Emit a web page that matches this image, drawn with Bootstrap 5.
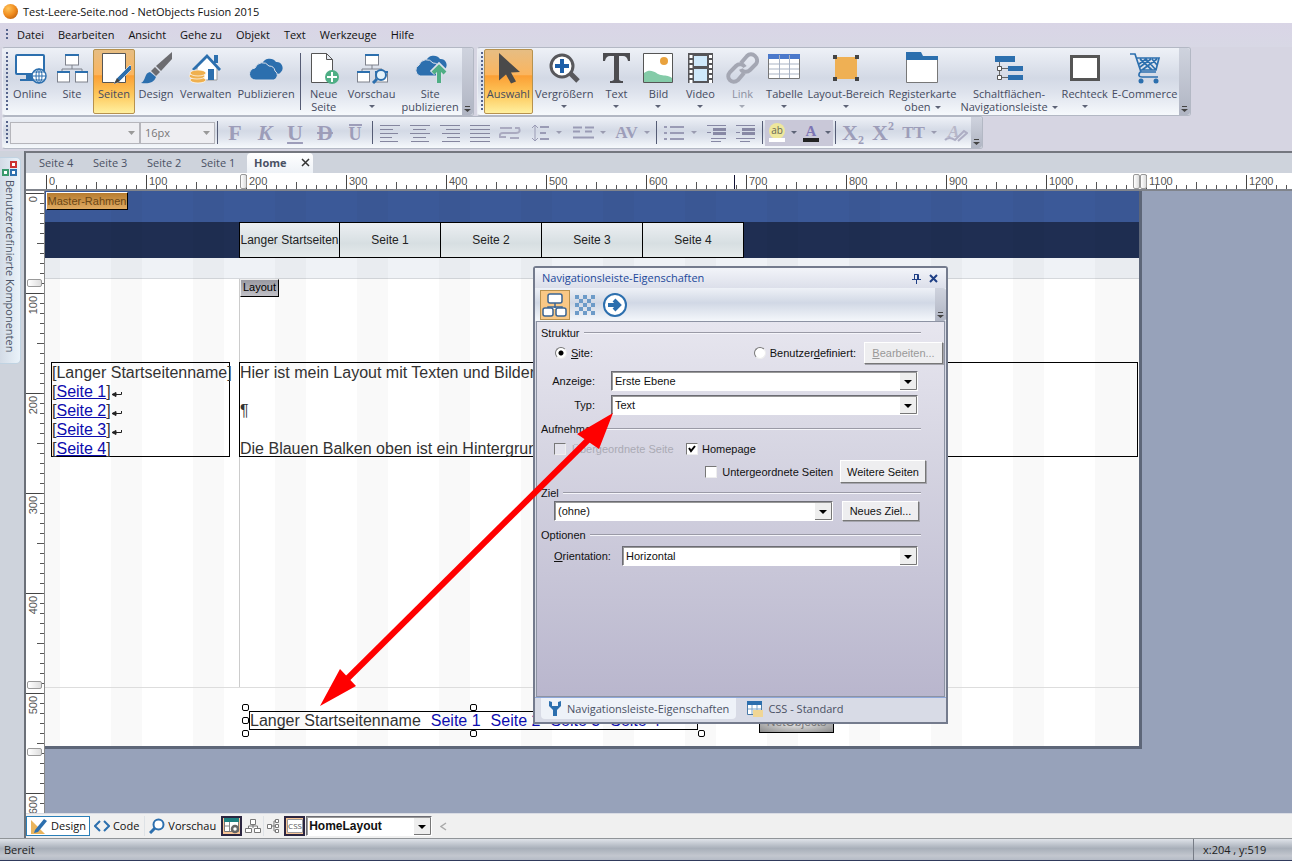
<!DOCTYPE html>
<html lang="de">
<head>
<meta charset="utf-8">
<meta name="viewport" content="width=device-width, initial-scale=1">
<title>Test-Leere-Seite.nod - NetObjects Fusion 2015</title>
<link href="https://cdn.jsdelivr.net/npm/bootstrap@5.3.0/dist/css/bootstrap.min.css" rel="stylesheet">
<style>
body{font-family:"Open Sans","Noto Sans",sans-serif;font-size:12px;line-height:14px;background:#d6d5e2;color:#111;overflow:hidden}
button,input,select{font:inherit;color:inherit}
button{padding:0;border:0;background:none}
svg{display:block;flex:none}
.titlebar{height:23px;background:#fff;padding-left:3px;gap:5px;font-size:11px;line-height:16px}
.orb{width:15px;height:15px;border-radius:50%;background:radial-gradient(circle at 35% 30%,#ffc45a,#ef8a1d 50%,#a44d08)}
.menubar{height:24px;padding-left:6px;font-size:11px;background:linear-gradient(#d9d5e6,#d8d8e5)}
.menubar a{color:#111;text-decoration:none;margin-right:14px}
.dots{width:2px;background:repeating-linear-gradient(#56648c 0 2px,transparent 2px 4px)}
.menubar .dots{height:12px;margin-right:9px}
.strip{border:1px solid #b3b8c4;border-left-color:#eceef4;border-radius:3px;background:linear-gradient(#eef1f7,#d3d9e5 45%,#dde2ec 65%,#f6f9fc)}
.bars{padding-left:2px}
.tools{height:69px;gap:3px}
.tools .dots,.fmt .dots{margin:4px 1px 4px 3px}
.fmt .dots{margin-right:2px}
.grip{width:11px;background:linear-gradient(#cfd3de,#b0b5c3);border-radius:0 3px 3px 0;display:flex;align-items:flex-end;justify-content:center;padding-bottom:3px}
.tool{display:flex;flex-direction:column;align-items:center;min-width:42px;padding:3px 2px 0;color:#454b60;font-size:11px;line-height:13px;border:1px solid transparent;white-space:nowrap}
.tight .tool{padding:3px 1px 0}
.tight .tool.on{padding:3px 2px 0}
.tool svg.ico{width:34px;height:32px;margin-bottom:3px}
.tool.dim{color:#8c90a0}
.tool.on{border-color:#b7924e;border-radius:2px;background:linear-gradient(#e6bd83,#fbb55e 39%,#fb9f35 41%,#fdc75a 70%,#fff0a0);margin:1px 0}
.tool.on svg.ico{margin-top:-1px}
.arr{display:inline-block;width:0;height:0;border:3px solid transparent;border-top-color:#5d6376;border-bottom:0}
.tool .arr{margin-top:5px}
.tool span .arr{margin:0 0 2px 2px}
.vsep{width:1px;background:#555c75;margin:5px 2px}
.fmtrow{margin-bottom:2px}
.fmt{height:33px;color:#9a9bb8}
.fmt .combo{height:22px;border:1px solid #b5b5bb;background:#eeeef2;color:#777;font-size:11px;padding:0 4px;border-radius:0}
.combo.face{width:130px}.combo.size{width:75px}
.fmt button{width:30px;height:26px;display:flex;align-items:center;justify-content:center;font-family:"Liberation Serif",serif;font-size:22px;line-height:24px;font-weight:700;color:#9d9db9}
.fmt button.n{width:29px}
.fmt button.w{width:43px;gap:6px}
.fmt button.w .arr{border-top-color:#9a9bb0}
.fmt button.mid{font-size:17px}
.fmt button small{font-size:12px;line-height:12px}
.fmt button .lo{align-self:flex-end}
.fmt button .hi{align-self:flex-start}
.over{border-top:2px solid #9d9db9;font-size:18px;line-height:16px}
.fmt .vsep{margin:4px 2px}
.pick{appearance:none;background-repeat:no-repeat!important}
.fmt .pick{background:#eeeef2 url("data:image/svg+xml,%3Csvg xmlns='http://www.w3.org/2000/svg' width='7' height='4'%3E%3Cpath d='M0 0h7L3.500 4z' fill='%23999'/%3E%3C/svg%3E") right 4px center}
.tones{background:#c9c8d8}
.fmt .tones button{width:34px;gap:5px}
.side{width:24px;background:#ced3dc;flex:none;padding-top:6px}
.sidetab{width:21px;height:207px;border-radius:0 5px 5px 0;background:linear-gradient(90deg,#d3dbe6,#eaf3fa);border:1px solid #c0d3e2;border-left:0;padding-top:3px;color:#4c5466}
.sidetab span{writing-mode:vertical-rl;font-size:11px;line-height:18px;margin-top:3px;white-space:nowrap}
.mainrow,.deskrow{min-height:0}
.work{border-left:2px solid #6b7078;border-top:2px solid #74777f;min-width:0}
.pagetabs{height:20px;background:#ced3dc;padding-left:3px;color:#4a5164}
.pagetabs a{color:inherit;text-decoration:none;padding:0 10px;font-size:11px;line-height:20px;width:54px;text-align:center;white-space:nowrap}
.pagetabs a.cur{width:66px;margin-left:2px;background:linear-gradient(#fff,#eef2f7);border-radius:4px 4px 0 0;font-weight:700;display:flex;justify-content:space-between;padding:0 3px 0 7px}
.hruler{height:18px;background:#fff;border-bottom:2px solid #80848c;padding-left:20px;overflow:hidden;position:relative;color:#555}
.hruler .scale{background:repeating-linear-gradient(90deg,#555 0 1px,transparent 1px 10px) 0 100%/100% 4px no-repeat,repeating-linear-gradient(90deg,#555 0 1px,transparent 1px 50px) 0 100%/100% 7px no-repeat}
.hruler .scale span{width:100px;flex:none;border-left:1px solid #444;padding-left:2px;font:11px/12px "Liberation Sans",sans-serif;height:14px;margin-top:2px}
.knob{position:absolute;width:7px;height:15px;top:1px;background:linear-gradient(90deg,#fff,#ddd);border:1px solid #999;border-radius:2px}
.kx1{left:214px}.kx2{left:1107px}.kx3{left:1114px}
.cursorline{position:absolute;left:708px;top:2px;width:1px;height:14px;background:#113}
.vruler .knob{width:15px;height:8px;left:1px}
.vruler .ky1{top:88px}.vruler .ky2{top:490px}.vruler .ky3{top:557px}
.vruler{width:19px;flex:none;background:#fff;border-right:1px solid #888;overflow:hidden;position:relative;padding-top:2px;color:#555}
.vruler .scale{height:700px;background:repeating-linear-gradient(#555 0 1px,transparent 1px 10px) 100% 0/4px 100% no-repeat,repeating-linear-gradient(#555 0 1px,transparent 1px 50px) 100% 0/7px 100% no-repeat}
.vruler .scale span{height:100px;flex:none;width:16px;border-top:1px solid #444;padding-top:2px}
.vruler .scale b{display:block;writing-mode:vertical-rl;transform:rotate(180deg);font:11px/14px "Liberation Sans",sans-serif}
.stage{background:#97a2ba;overflow:hidden;position:relative;min-width:0}
.sheet{position:relative;width:1097px;height:558px;border-right:3px solid #5d6678;border-bottom:3px solid #5d6678;background:#fff;font-family:"Liberation Sans",sans-serif;color:#333}
.guides{position:absolute;inset:0;background:repeating-linear-gradient(90deg,rgba(0,0,0,.022) 0 31px,transparent 31px 82px);background-position:-16px 0}
.b1{height:31px;background:#3b5998}.b2{height:36px;background:#1f2e52}.b3{height:21px;background:#eff2f6;border-bottom:1px solid #d5d8dc}
.obj{position:absolute}
.tag-m{left:1px;top:1px;background:linear-gradient(#b77c30,#e0ab62);border:1px solid #fff;border-right-color:#000;border-bottom-color:#000;font-size:11px;line-height:17px;width:82px;height:18px;text-align:center;color:#6b4716;white-space:nowrap}
.tag-l{left:195px;top:88px;background:linear-gradient(#9a9aa2,#c0c0c6);border:1px solid #eee;border-right-color:#000;border-bottom-color:#000;font-size:11px;line-height:15px;width:39px;height:18px;text-align:center;color:#000}
.sitenav{left:194px;top:31px;border:1px solid #000}
.sitenav a{width:101px;height:34px;border-right:1px solid #000;background:linear-gradient(#eceff2,#d7dfe2 60%,#e5eaeb);font-size:12px;line-height:34px;color:#222;text-decoration:none;text-align:center;overflow:hidden;white-space:nowrap}
.sitenav a:first-child{width:100px}
.sitenav a:last-child{border:0;width:100px}
.textobj{border:1px solid #000;font-size:16px;line-height:19px;white-space:nowrap}
.textobj a{color:#0c0cae}
.tree{left:6px;top:171px;width:179px;height:95px}
.copytext{left:194px;top:171px;width:899px;height:95px}
.area{left:194px;top:88px;right:0;height:409px;border-left:1px solid #ccc}
.areaend{left:0;right:0;top:496px;border-top:1px solid #ddd}
.foot{left:204px;top:520px;width:449px;height:19px;line-height:18px;display:flex;gap:10px}
.foot a{text-decoration:none}
.foot i{position:absolute;width:7px;height:7px;border:1px solid #000;border-radius:2px;background:#fff}
.foot .t{top:-8px}.foot .m{top:5px}.foot .b{top:18px}
.foot .l{left:-8px}.foot .c{left:220px}.foot .r{left:448px}
.logo{left:714px;top:520px;width:75px;height:22px;background:radial-gradient(#f4f4f4,#8a8a8a);border:1px solid #000;font-size:12px;color:#777;text-align:center;line-height:20px}
.dialogbox{left:488px;top:75px;width:415px;height:458px;border:2px solid #747b8d;border-radius:3px 3px 0 0;background:#d8dbe6;font:11px/14px "Liberation Sans",sans-serif;color:#111}
.dlg-title{height:20px;background:linear-gradient(#f2f4f9,#dcdfea);font:11px/20px "Open Sans",sans-serif;color:#22489a;padding:0 8px 0 7px}
.dlg-tools{height:33px;background:linear-gradient(#eef1f7,#d1d8e5 45%,#f4f7fb);padding-left:5px}
.dlg-tools button{width:30px;height:30px;display:grid;place-items:center}
.dlg-tools .on{background:#f9c885;border:1px solid #b8914e}
.dlg-body{margin:0 1px;border:1px solid #8d93a3;background:linear-gradient(#e7e6ef,#d6d5e2 35%,#b9b6cd);padding:4px 1px 0 4px}
.dlg-body .head{display:flex;align-items:center;gap:4px;height:14px;padding-right:22px;font-size:11px;margin:0;line-height:14px}
.dlg-body .head.sp{margin-top:7px}
.dlg-body .head.sp-s{margin-top:3px}
.dlg-body .head::after{content:"";flex:1;border-top:1px solid #9a9aa6;border-bottom:1px solid #f5f5fa}
.dlg-body .line{display:flex;align-items:center;white-space:nowrap;margin-top:4px}
.dlg-body .line.kind{height:22px;padding-left:14px;margin:2px 0 7px}
.dlg-body .line.near{margin-top:1px}
.dlg-body .line.far{margin-top:6px}
.line.inset{padding-left:13px}
.line.right{justify-content:flex-end;padding-right:17px}
.lab-a{width:54px;text-align:right;margin-right:16px}
.lab-k{width:107px;color:#aaaab4;margin:0 7px 0 6px}
.lab-u{margin:0 7px 0 5px}
.lab-o{width:68px}
.box{appearance:none;margin:0;width:12px;height:12px;flex:none;background:#fff;border:1px solid #777;border-right-color:#eee;border-bottom-color:#eee}
.box:disabled{background:#e4e3ec}
.box:checked{background:#fff url("data:image/svg+xml,%3Csvg xmlns='http://www.w3.org/2000/svg' width='10' height='10'%3E%3Cpath d='M2 4l2 3 4-5' fill='none' stroke='black' stroke-width='2'/%3E%3C/svg%3E")}
.box[type=radio]{border-radius:50%}
.box[type=radio]:checked{background:radial-gradient(#000 0 2px,#fff 3px)}
.pushy{background:#eeeef0;border:1px solid #fff;border-right-color:#777;border-bottom-color:#777;box-shadow:1px 1px 0 #a5a5ad;width:79px;height:22px}
.pushy.mehr{width:86px;height:23px}
.pushy.neu{width:77px;height:20px;margin-left:9px}
.pushy:disabled{color:#999}
.drop{height:20px;border:1px solid #6c6c74;border-right-color:#fff;border-bottom-color:#fff;border-radius:0;box-shadow:inset 1px 1px 0 #999;padding:0 20px 0 3px;background:#fff url("data:image/svg+xml,%3Csvg xmlns='http://www.w3.org/2000/svg' width='17' height='17'%3E%3Cpath d='M0 0h17v17H0z' fill='%23eee'/%3E%3Cpath d='M0 16.500h16.500V0' fill='none' stroke='%23777'/%3E%3Cpath d='M4 7h8l-4 4z'/%3E%3C/svg%3E") right 0 center}
.w307{width:307px}.w296{width:296px}.w279{width:279px}
.dlg-tabs{height:25px;font:11px/20px "Open Sans",sans-serif;color:#4a5164;padding-left:6px;border-top:1px solid #8ea7d9}
.dlg-tabs button{display:flex;align-items:center;gap:5px;height:21px;padding:0 7px;white-space:nowrap}
.dlg-tabs .cur{background:#eef2f8;border-radius:0 0 4px 4px}
.arrow{left:0;top:0;pointer-events:none}
.viewbar{height:25px;background:#f0f0f0;border-top:1px solid #d9dce4}
.viewbar button{display:flex;align-items:center;gap:3px;height:20px;padding:0 5px 0 4px;white-space:nowrap;font-size:11px}
.viewbar .sel{border:1px solid #2a7fb8;background:#fff;padding:0 3px}
.viewbar .sq{width:21px;padding:0;justify-content:center}
.viewbar .hot{background:#f9c596;border:2px solid #2b2540}
.viewbar .drop{font:700 12px/16px "Liberation Sans",sans-serif;width:126px;padding-left:2px;margin-left:1px}
.status{height:23px;flex:none;background:linear-gradient(#dfe3e9,#a8afb9 45%,#c3c7cf 80%,#b5bbc6);border-top:1px solid #909498;border-bottom:1px solid #303a5c;font-size:11px;line-height:21px;color:#222}
.status .pos{width:99px;border-left:1px solid #777c86;padding-left:9px}
</style>
</head>
<body class="d-flex flex-column vh-100">
<header class="titlebar d-flex align-items-center flex-shrink-0"><span class="orb"></span><span>Test-Leere-Seite.nod - NetObjects Fusion 2015</span></header>
<nav class="menubar d-flex align-items-center flex-shrink-0"><span class="dots"></span><a href="#">Datei</a><a href="#">Bearbeiten</a><a href="#">Ansicht</a><a href="#">Gehe zu</a><a href="#">Objekt</a><a href="#">Text</a><a href="#">Werkzeuge</a><a href="#">Hilfe</a></nav>

<div class="bars tools d-flex flex-shrink-0">
 <div class="strip d-flex">
  <span class="dots"></span>
  <button class="tool"><svg class="ico" viewBox="0 0 34 32"><rect x="3" y="3" width="28" height="19" rx="1" fill="#fff" stroke="#2c6fae" stroke-width="2"/><path d="M7 27h14v2H7zM13 23h6v4h-6z" fill="#2c6fae"/><circle cx="26" cy="24" r="7" fill="#fff" stroke="#2c6fae" stroke-width="1.500"/><ellipse cx="26" cy="24" rx="3" ry="7" fill="none" stroke="#2c6fae"/><path d="M19 24h14M26 17v14M21 20h10M21 28h10" stroke="#2c6fae"/></svg>Online</button>
  <button class="tool"><svg class="ico" viewBox="0 0 34 32"><g fill="#fff" stroke="#7e828c"><path d="M17 13v4M7 20v-3h20v3" fill="none"/><rect x="10.500" y="3" width="13" height="10"/><rect x="2.500" y="20" width="12" height="10"/><rect x="20.500" y="20" width="12" height="10"/></g><path d="M10 3h14M2 20h13M20 20h13" stroke="#2c6fae" stroke-width="2"/></svg>Site</button>
  <button class="tool on"><svg class="ico" viewBox="0 0 34 32"><path d="M5.500 1.500h23v29h-23z" fill="#fff" stroke="#555"/><path d="M17 32l3-6 13-13 3 3-13 13z" fill="#2c6fae" stroke="#fff" stroke-width=".6"/><path d="M17 32l3-6 3 3z" fill="#444"/></svg>Seiten</button>
  <button class="tool"><svg class="ico" viewBox="0 0 34 32"><path d="M33 0v7L22 19l-5-5z" fill="#6c6c70"/><path d="M16 15l5 5-4 4-5-5z" fill="#6c6c70"/><path d="M11 20l6 5c-2 6-8 7-15 6 5-2 3-10 9-11z" fill="#2c6fae"/></svg>Design</button>
  <button class="tool"><svg class="ico" viewBox="0 0 34 32"><path d="M8 14L18 4l10 10v14H8z" fill="#fff" stroke="#999"/><path d="M25 3h4v8h-4zM3 17L18 2l14 15-2 2L18 6 5 19z" fill="#2c6fae"/><path d="M19 17h6v11h-6z" fill="#2c6fae"/><g fill="#efb04e" stroke="#fff" stroke-width=".7"><ellipse cx="9" cy="28" rx="8" ry="3"/><ellipse cx="8" cy="24" rx="8" ry="3"/><ellipse cx="9" cy="21" rx="8" ry="3"/></g></svg>Verwalten</button>
  <button class="tool"><svg class="ico" viewBox="0 0 34 32"><path d="M14 22a5 5 0 01-1-10 8 8 0 0114-2 6 6 0 015 10q-1 2-4 2z" fill="#2c6fae"/><path d="M7 28a6 6 0 01-1-12 8 8 0 0114-2 6 6 0 016 5 5 5 0 01-1 9z" fill="#2c6fae" stroke="#dbe0ea"/></svg>Publizieren</button>
  <span class="vsep"></span>
  <button class="tool"><svg class="ico" viewBox="0 0 34 32"><path d="M4.500 1.500h15l6 6v23h-21zM19.500 1.500v6h6" fill="#fff" stroke="#555"/><circle cx="25" cy="25" r="7" fill="#4fae85"/><path d="M25 20v10M20 25h10" stroke="#fff" stroke-width="2"/></svg><span>Neue</span><span>Seite</span></button>
  <button class="tool"><svg class="ico" viewBox="0 0 34 32"><g fill="#fff" stroke="#7e828c"><path d="M17 13v4M7 20v-3h20v3" fill="none"/><rect x="10.500" y="3" width="13" height="10"/><rect x="2.500" y="20" width="12" height="10"/><rect x="20.500" y="20" width="12" height="10"/></g><path d="M10 3h14M2 20h13M20 20h13" stroke="#2c6fae" stroke-width="2"/><circle cx="26" cy="23" r="5" fill="#e5f3fb" stroke="#2c6fae" stroke-width="2"/><path d="M22 27l-4 4" stroke="#2c6fae" stroke-width="3"/></svg>Vorschau<i class="arr"></i></button>
  <button class="tool"><svg class="ico" viewBox="0 0 34 32"><path d="M14 19a5 5 0 01-1-10 8 8 0 0114-2 6 6 0 015 10q-1 2-4 2z" fill="#2c6fae"/><path d="M7 24a6 6 0 01-1-11 8 8 0 0114-2 6 6 0 016 5 5 5 0 01-1 8z" fill="#2c6fae" stroke="#dbe0ea"/><path d="M26 31V15M19 21l7-7 7 7" fill="none" stroke="#dbe0ea" stroke-width="6"/><path d="M26 31V15M20 21l6-6 6 6" fill="none" stroke="#4fae85" stroke-width="4"/></svg><span>Site</span><span>publizieren</span></button>
  <span class="grip"><svg width="7" height="6"><path d="M1 0h5v1H1zM0 3h7L3.500 6z" fill="#444"/></svg></span>
 </div>
 <div class="strip tight d-flex">
  <span class="dots"></span>
  <button class="tool on"><svg class="ico" viewBox="0 0 34 32"><path d="M8 1l21 19-9 .5 5 9-5 2-5-9-7 6z" fill="#4a4a4a"/></svg>Auswahl</button>
  <button class="tool"><svg class="ico" viewBox="0 0 34 32"><path d="M23 21l8 8" stroke="#58585c" stroke-width="5"/><circle cx="15" cy="14" r="11" fill="#fff" stroke="#58585c" stroke-width="3"/><path d="M15 7v14M8 14h14" stroke="#1d5fa8" stroke-width="4"/></svg>Vergrößern<i class="arr"></i></button>
  <button class="tool"><svg class="ico" viewBox="0 0 34 32"><path d="M4 1h27v8h-2q-1-5-5-5h-4v23q0 2 4 2v2H11v-2q4 0 4-2V4h-4q-4 0-5 5H4z" fill="#4c4c50"/></svg>Text<i class="arr"></i></button>
  <button class="tool"><svg class="ico" viewBox="0 0 34 32"><path d="M2.500 1.500h29v29h-29z" fill="#fff" stroke="#555"/><path d="M3 21c8-6 13 2 17 2 4 1 7 0 11 3v4H3z" fill="#84cba8"/><circle cx="23" cy="9" r="4" fill="#e9a23d"/></svg>Bild<i class="arr"></i></button>
  <button class="tool"><svg class="ico" viewBox="0 0 34 32"><path d="M5 1h25v30H5z" fill="#555559"/><path d="M11 4h13v10H11zM11 17h13v12H11z" fill="#cfe9fb"/><path d="M8 3v28M27.500 3v28" stroke="#fff" stroke-width="3" stroke-dasharray="3 2"/></svg>Video<i class="arr"></i></button>
  <button class="tool dim"><svg class="ico" viewBox="0 0 34 32"><g fill="none" stroke="#a4a7b3" stroke-width="4"><path d="M16 11l6-7c5-5 13 2 9 8l-6 6c-3 3-8 2-9-1"/><path d="M19 21l-6 7C7 33 0 26 5 20l6-6c3-3 7-2 9 1"/></g></svg>Link<i class="arr opacity-50"></i></button>
  <button class="tool"><svg class="ico" viewBox="0 0 34 32"><path d="M1.500 2.500h31v24h-31z" fill="#fff" stroke="#777"/><path d="M1 2h32v5H1z" fill="#4a78cb"/><path d="M2 12h30M2 17h30M2 22h30M12.500 3v23M22.500 3v23" stroke="#a9b3c4"/></svg>Tabelle<i class="arr"></i></button>
  <button class="tool"><svg class="ico" viewBox="0 0 34 32"><rect x="6" y="5" width="22" height="22" fill="#efb054"/><path d="M4 3h4v4H4zM26 3h4v4h-4zM4 25h4v4H4zM26 25h4v4h-4z" fill="#444"/></svg>Layout-Bereich<i class="arr"></i></button>
  <button class="tool"><svg class="ico" viewBox="0 0 34 32"><path d="M1.500 6.500h31v24h-31z" fill="#fff" stroke="#777"/><path d="M1 0h15l2 4h15v4H1z" fill="#2c6fae"/></svg><span>Registerkarte</span><span>oben<i class="arr ms-1"></i></span></button>
  <button class="tool"><svg class="ico" viewBox="0 0 34 32"><path d="M3 4h20v6H3zM16 14h15v5H16zM16 23h15v5H16z" fill="#2c6fae"/><path d="M7.500 10v16M8 16.500h8M8 25.500h8" stroke="#666"/><path d="M5.500 14.500h4v4h-4zM5.500 23.500h4v4h-4z" fill="#fff" stroke="#555"/></svg><span>Schaltflächen-</span><span>Navigationsleiste<i class="arr ms-1"></i></span></button>
  <button class="tool"><svg class="ico" viewBox="0 0 34 32"><path d="M3.500 4.500h27v23h-27z" fill="#fff" stroke="#555" stroke-width="3"/></svg>Rechteck<i class="arr"></i></button>
  <button class="tool"><svg class="ico" viewBox="0 0 34 32"><path d="M2 2h5l6 18h15M9 6h22l-3 12H13M12 20q-3 5 2 5h16M12 7l12 11M18 7l10 11M24 7l5 6M29 7L14 18M23 7L12 15M18 7l-7 5" fill="none" stroke="#2c6fae" stroke-width="1.700"/><circle cx="13" cy="29" r="2.500" fill="#2c6fae"/><circle cx="28" cy="29" r="2.500" fill="#2c6fae"/></svg>E-Commerce</button>
  <span class="grip"><svg width="7" height="6"><path d="M1 0h5v1H1zM0 3h7L3.500 6z" fill="#444"/></svg></span>
 </div>
</div>

<div class="bars fmtrow d-flex flex-shrink-0">
 <div class="strip fmt d-flex align-items-center">
  <span class="dots align-self-stretch"></span>
  <select class="combo pick face" aria-label="Schriftart"><option></option></select>
  <select class="combo pick size" aria-label="Schriftgröße"><option>16px</option></select>
  <span class="vsep align-self-stretch"></span>
  <button>F</button><button><i>K</i></button><button><u>U</u></button><button><s>D</s></button><button><span class="over">U</span></button>
  <span class="vsep align-self-stretch"></span>
  <button aria-label="Links"><svg width="20" height="18" stroke="#85869f"><path d="M0 1.500h20M0 5.500h13M0 9.500h18M0 13.500h12M0 17.500h18"/></svg></button>
  <button aria-label="Zentriert"><svg width="20" height="18" stroke="#85869f"><path d="M0 1.500h20M3 5.500h13M0 9.500h20M3 13.500h13M1 17.500h18"/></svg></button>
  <button aria-label="Rechts"><svg width="20" height="18" stroke="#85869f"><path d="M0 1.500h20M6 5.500h14M2 9.500h18M7 13.500h13M2 17.500h18"/></svg></button>
  <button aria-label="Blocksatz"><svg width="20" height="18" stroke="#85869f"><path d="M0 1.500h20M0 5.500h20M0 9.500h20M0 13.500h20M0 17.500h20"/></svg></button>
  <button aria-label="Umbruch"><svg width="22" height="18" stroke="#aaaac0" fill="none"><path d="M1 4h12M16 4h4q2 5-3 5H4q-4 0-3 4h6M11 14h9" stroke-width="2"/></svg></button>
  <button class="w" aria-label="Zeilenabstand"><svg width="18" height="18" stroke="#9a9bb5" fill="none"><path d="M3 1v16M0 4l3-3 3 3M0 14l3 3 3-3"/><path d="M8 3h9M8 9h6M8 15h9" stroke-width="2"/></svg><i class="arr"></i></button>
  <button class="w" aria-label="Absatzabstand"><svg width="21" height="18" stroke="#9a9bb5"><path d="M0 3.500h9M12 3.500h9M0 7.500h7M12 7.500h7M0 13.500h21" stroke-width="2"/></svg><i class="arr"></i></button>
  <button class="w mid">AV<i class="arr"></i></button>
  <span class="vsep align-self-stretch"></span>
  <button class="w" aria-label="Liste"><svg width="21" height="18" stroke="#9a9bb5" fill="none"><path d="M6 3h14M6 9h14M6 15h14M0 3h3M0 9h3M0 15h3" stroke-width="2"/></svg><i class="arr"></i></button>
  <button class="n" aria-label="Ausrücken"><svg width="20" height="18" stroke="#8788a4" fill="none"><path d="M0 1.500h19M4 14.500h15M4 17.500h10M0 8.500h4"/><path d="M6 5.500h13M6 9.500h13" stroke-width="3"/></svg></button>
  <button class="n" aria-label="Einrücken"><svg width="20" height="18" stroke="#8788a4" fill="none"><path d="M0 1.500h19M0 14.500h19M4 17.500h10M0 8.500h4"/><path d="M6 5.500h13M6 9.500h13" stroke-width="3"/></svg></button>
  <span class="vsep align-self-stretch"></span>
  <span class="tones d-flex"><button aria-label="Hintergrundfarbe"><svg width="18" height="20"><circle cx="9" cy="8" r="8" fill="#eee79c"/><path d="M1 15h16v4H1z" fill="#fff"/><text x="9" y="11" font-family="Open Sans" font-size="10" font-weight="400" text-anchor="middle" fill="#665">ab</text></svg><i class="arr"></i></button><button aria-label="Textfarbe"><svg width="18" height="20"><path d="M1 15h16v4H1z" fill="#222"/><text x="9" y="13" font-size="15" text-anchor="middle" fill="#7d75b4">A</text></svg><i class="arr"></i></button></span>
  <span class="vsep align-self-stretch"></span>
  <button>X<small class="lo">2</small></button><button>X<small class="hi">2</small></button><button class="w mid">TT<i class="arr"></i></button>
  <button aria-label="Format löschen"><svg width="24" height="20"><text x="4" y="14" font-size="17" font-style="italic" fill="#b7b7c8">A</text><path d="M1 17q4-4 10 0l9-9 3 2-9 8" fill="none" stroke="#aeaec4" stroke-width="2"/></svg></button>
  <span class="grip align-self-stretch"><svg width="7" height="6"><path d="M1 0h5v1H1zM0 3h7L3.500 6z" fill="#444"/></svg></span>
 </div>
</div>

<main class="mainrow d-flex flex-grow-1">
 <aside class="side"><div class="sidetab d-flex flex-column align-items-center"><svg width="16" height="16" fill="#fff" stroke-width="2"><path d="M9 1h5v5H9z" stroke="#c33"/><path d="M1 9h5v5H1z" stroke="#3a9a6e"/><path d="M9 9h5v5H9z" stroke="#2c6fae"/></svg><span>Benutzerdefinierte Komponenten</span></div></aside>
 <section class="work d-flex flex-column flex-grow-1">
  <nav class="pagetabs d-flex flex-shrink-0"><a href="#">Seite 4</a><a href="#">Seite 3</a><a href="#">Seite 2</a><a href="#">Seite 1</a><a href="#" class="cur">Home<svg width="9" height="20" stroke="#333" stroke-width="1.500"><path d="M1 6l7 7M8 6l-7 7"/></svg></a></nav>
  <div class="hruler flex-shrink-0"><div class="scale d-flex"><span>0</span><span>100</span><span>200</span><span>300</span><span>400</span><span>500</span><span>600</span><span>700</span><span>800</span><span>900</span><span>1000</span><span>1100</span><span>1200</span></div><i class="knob kx1"></i><i class="knob kx2"></i><i class="knob kx3"></i><i class="cursorline"></i></div>
  <div class="deskrow d-flex flex-grow-1">
   <div class="vruler"><div class="scale d-flex flex-column"><span><b>0</b></span><span><b>100</b></span><span><b>200</b></span><span><b>300</b></span><span><b>400</b></span><span><b>500</b></span><span><b>600</b></span></div><i class="knob ky1"></i><i class="knob ky2"></i><i class="knob ky3"></i></div>
   <div class="stage flex-grow-1">
    <div class="sheet">
     <div class="b1"></div><div class="b2"></div><div class="b3"></div>
     <div class="guides"></div>
     <div class="obj area"></div><div class="obj areaend"></div>
     <div class="obj tag-m">Master-Rahmen</div><div class="obj tag-l">Layout</div>
     <nav class="obj sitenav d-flex"><a href="#">Langer Startseiten</a><a href="#">Seite 1</a><a href="#">Seite 2</a><a href="#">Seite 3</a><a href="#">Seite 4</a></nav>
     <div class="obj textobj tree"><div>[Langer Startseitenname]</div><div class="d-flex">[<a href="#">Seite 1</a>]<svg width="12" height="19" fill="none" stroke="#222"><path d="M2 12.500h8.500V10"/><path d="M1 12.500l4-2v4z" fill="#222"/></svg></div><div class="d-flex">[<a href="#">Seite 2</a>]<svg width="12" height="19" fill="none" stroke="#222"><path d="M2 12.500h8.500V10"/><path d="M1 12.500l4-2v4z" fill="#222"/></svg></div><div class="d-flex">[<a href="#">Seite 3</a>]<svg width="12" height="19" fill="none" stroke="#222"><path d="M2 12.500h8.500V10"/><path d="M1 12.500l4-2v4z" fill="#222"/></svg></div><div>[<a href="#">Seite 4</a>]</div></div>
     <div class="obj textobj copytext">Hier ist mein Layout mit Texten und Bildern.<br><br>¶<br><br>Die Blauen Balken oben ist ein Hintergrund</div>
     <div class="obj textobj foot"><span>Langer Startseitenname</span><a href="#">Seite 1</a><a href="#">Seite 2</a><a href="#">Seite 3</a><a href="#">Seite 4</a><i class="t l"></i><i class="t c"></i><i class="m l"></i><i class="b l"></i><i class="b c"></i><i class="b r"></i></div>
     <div class="obj logo">NetObjects</div>
    </div>

    <div class="obj dialogbox d-flex flex-column" role="dialog" aria-label="Navigationsleiste-Eigenschaften">
     <div class="dlg-title d-flex justify-content-between align-items-center"><span>Navigationsleiste-Eigenschaften</span><span class="d-flex gap-2"><svg width="9" height="11" stroke="#1f3f85" fill="none"><path d="M2.500 1v5M2 1.500h4.500V6M5.500 1v5M0 6.500h9M4.500 7v4"/></svg><svg width="9" height="11" stroke="#1f3f85" stroke-width="2"><path d="M1 2l7 7M8 2L1 9"/></svg></span></div>
     <div class="dlg-tools d-flex align-items-center">
      <button class="on" aria-label="Struktur"><svg width="26" height="26" fill="#fff" stroke="#3b6594" stroke-width="1.500"><path d="M13 11v5M6 17v-2h14v2"/><rect x="6" y="2" width="14" height="9" rx="2"/><rect x="1" y="16" width="10" height="8" rx="2"/><rect x="14" y="16" width="10" height="8" rx="2"/></svg></button>
      <button aria-label="Muster"><svg width="20" height="20" fill="#6d9bc8"><path d="M0 0h4v4H0zM8 0h4v4H8zM16 0h4v4h-4zM4 4h4v4H4zM12 4h4v4h-4zM0 8h4v4H0zM8 8h4v4H8zM16 8h4v4h-4zM4 12h4v4H4zM12 12h4v4h-4zM0 16h4v4H0zM8 16h4v4H8zM16 16h4v4h-4z"/></svg></button>
      <button aria-label="Weiter"><svg width="24" height="24"><circle cx="12" cy="12" r="11" fill="#fff" stroke="#2c6fae" stroke-width="2"/><path d="M5 12h11M11 7l5 5-5 5" fill="none" stroke="#2c6fae" stroke-width="4"/></svg></button>
      <span class="grip ms-auto align-self-stretch"><svg width="7" height="6"><path d="M1 0h5v1H1zM0 3h7L3.500 6z" fill="#444"/></svg></span>
     </div>
     <form class="dlg-body flex-grow-1">
      <h2 class="head">Struktur</h2>
      <div class="line kind"><input class="box" type="radio" name="s" id="r1" checked><label for="r1" class="ms-1"><u>S</u>ite:</label><input class="box ms-auto" type="radio" name="s" id="r2"><label for="r2" class="ms-1 me-2">Benutzer<u>d</u>efiniert:</label><button type="button" class="pushy" disabled><u>B</u>earbeiten...</button></div>
      <div class="line"><label for="c1" class="lab-a">Anzeige:</label><select id="c1" class="pick drop w307"><option>Erste Ebene</option></select></div>
      <div class="line"><label for="c2" class="lab-a">Typ:</label><select id="c2" class="pick drop w307"><option>Text</option></select></div>
      <h2 class="head sp">Aufnehmen</h2>
      <div class="line inset far"><input class="box" type="checkbox" id="k1" disabled><label for="k1" class="lab-k">Über<u>g</u>eordnete Seite</label><input class="box" type="checkbox" id="k2" checked><label for="k2" class="ms-1">Homepage</label></div>
      <div class="line right"><input class="box" type="checkbox" id="k3"><label for="k3" class="lab-u">Untergeordnete Seiten</label><button type="button" class="pushy mehr">Weitere Seiten</button></div>
      <h2 class="head sp-s">Ziel</h2>
      <div class="line inset near"><select aria-label="Ziel" class="pick drop w279"><option>(ohne)</option></select><button type="button" class="pushy neu">Neues Ziel...</button></div>
      <h2 class="head sp">Optionen</h2>
      <div class="line inset"><label for="c4" class="lab-o"><u>O</u>rientation:</label><select id="c4" class="pick drop w296"><option>Horizontal</option></select></div>
     </form>
     <div class="dlg-tabs d-flex"><button class="cur"><svg width="14" height="17"><path d="M1 1v5l4 4v6h4v-6l4-4V1l-3 1v4H4V2z" fill="#2c6fae"/></svg>Navigationsleiste-Eigenschaften</button><button class="ms-1"><svg width="16" height="16"><path d="M.5.500h14v13H.5z" fill="#fff" stroke="#4a7ba8"/><path d="M0 0h15v4H0z" fill="#2c6fae"/><path d="M1 8h13M5 4v9M10 4v9" stroke="#7aa6cc"/><path d="M6 9h10v7H6z" fill="#f0d695"/></svg>CSS - Standard</button></div>
    </div>
    <svg class="obj arrow" width="600" height="540" fill="#f00"><path d="M301 489L544 248" stroke="#f00" stroke-width="6"/><path d="M568 222l-14 36-22-15zM275 515l20-37 16 17z"/></svg>
   </div>
  </div>
  <div class="viewbar d-flex align-items-center flex-shrink-0">
   <button class="sel"><svg width="18" height="18"><path d="M1 3v14h14z" fill="#e9b45c"/><path d="M5 13L14 2l3 2L8 15l-4 1z" fill="#2c6fae"/></svg>Design</button>
   <button><svg width="16" height="12" fill="none" stroke="#2c6fae" stroke-width="2"><path d="M6 1L1 6l5 5M10 1l5 5-5 5"/></svg>Code</button>
   <button class="border-start"><svg width="16" height="16"><circle cx="9.500" cy="6.500" r="5" fill="#fff" stroke="#2c6fae" stroke-width="2"/><path d="M6 10l-5 5" stroke="#2c6fae" stroke-width="3"/></svg>Vorschau</button>
   <button class="sq hot" aria-label="Layout"><svg width="16" height="16"><path d="M.5.500h14v13H.5z" fill="#fff" stroke="#777"/><path d="M0 0h15v4H0z" fill="#1e8080"/><path d="M5.500 4v9M1 8h4" stroke="#888"/><circle cx="11" cy="11" r="3" fill="none" stroke="#666" stroke-width="2.500"/></svg></button>
   <button class="sq" aria-label="Struktur"><svg width="16" height="16" fill="#fff" stroke="#777"><path d="M8 6v4M3.500 10V8h9v2"/><path d="M5.500 1.500h5v5h-5zM.5 10.500h6v4h-6zM9.500 10.500h6v4h-6z"/></svg></button>
   <button class="sq border-start" aria-label="Baum"><svg width="14" height="14" fill="#fff" stroke="#777"><path d="M5 7h3M8 2h-1v10h1"/><path d="M.5 5.500h4v4h-4zM8.500.500h3v3h-3zM8.500 5.500h3v3h-3zM8.500 10.500h3v3h-3z"/></svg></button>
   <button class="sq hot" aria-label="CSS"><svg width="16" height="14"><path d="M.5.500h15v13H.5z" fill="#fff" stroke="#999"/><text x="8" y="10" font-size="8" font-family="Open Sans" text-anchor="middle" fill="#555">CSS</text></svg></button>
   <select class="pick drop" aria-label="Layout wählen"><option>HomeLayout</option></select>
   <svg class="ms-2" width="7" height="9" fill="none" stroke="#aaa" stroke-width="1.500"><path d="M6 1L1 4.500 6 8"/></svg>
  </div>
 </section>
</main>
<footer class="status d-flex justify-content-between"><span class="ps-1">Bereit</span><span class="pos">x:204 , y:519</span></footer>
<script src="https://cdn.jsdelivr.net/npm/bootstrap@5.3.0/dist/js/bootstrap.bundle.min.js"></script>
</body>
</html>
